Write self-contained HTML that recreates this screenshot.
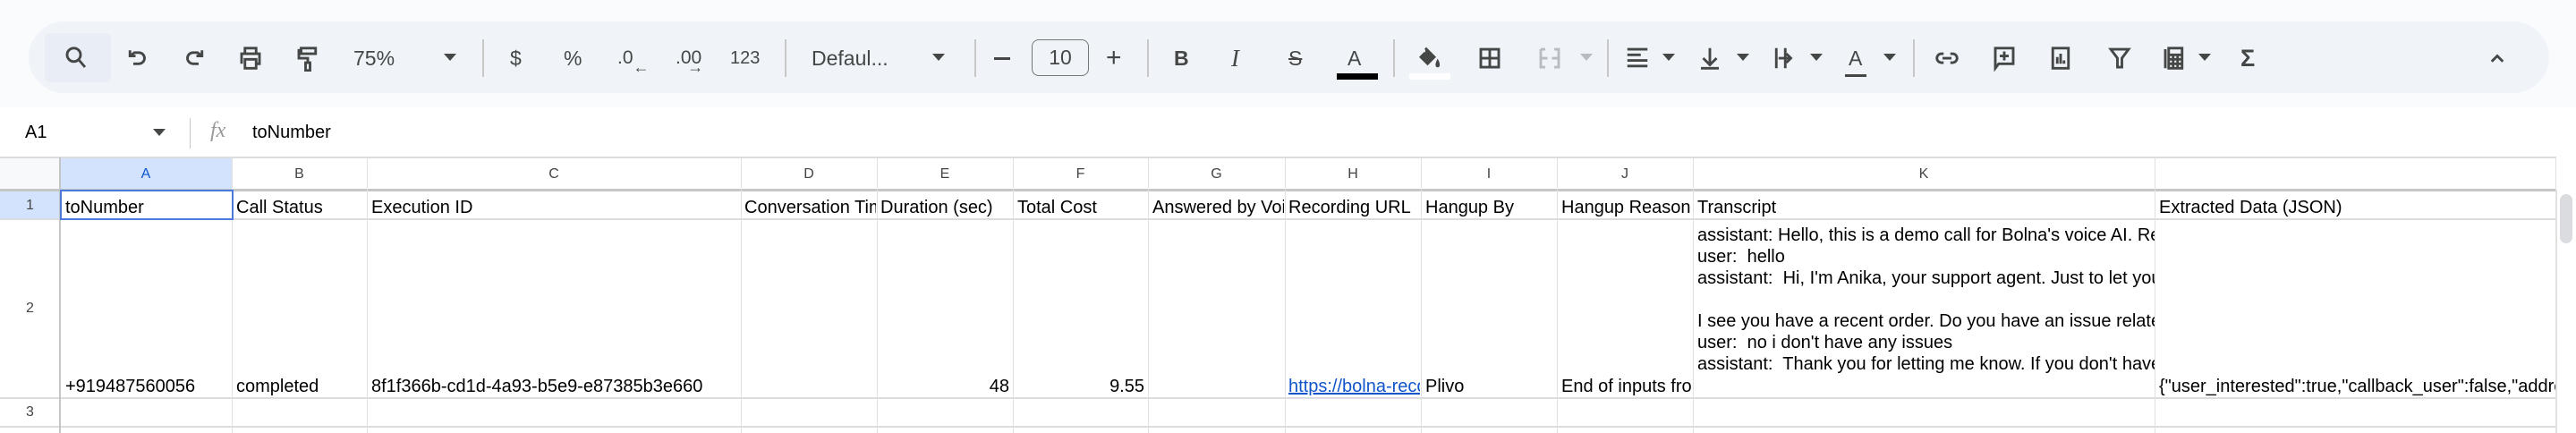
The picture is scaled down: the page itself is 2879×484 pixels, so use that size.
<!DOCTYPE html>
<html><head><meta charset="utf-8"><style>
*{margin:0;padding:0;box-sizing:border-box}
body{width:2879px;height:484px;overflow:hidden;background:#fff;font-family:"Liberation Sans",Arial,sans-serif;position:relative;color:#000}
.a{position:absolute}
.top{left:0;top:0;width:2879px;height:120px;background:#f9fbfd}
.pill{left:32px;top:24px;width:2817px;height:80px;background:#f0f4f9;border-radius:40px}
.ic{position:absolute;top:50px;width:30px;height:30px}
.ic svg{width:30px;height:30px;fill:none;stroke:#444746;stroke-width:2.3}
.t{position:absolute;color:#444746;font-size:23px;line-height:28px;top:51px}
.dd{position:absolute;top:60px;width:0;height:0;border-left:7px solid transparent;border-right:7px solid transparent;border-top:8px solid #444746}
.sep{position:absolute;top:44px;width:1.5px;height:42px;background:#c7c7c7}
.v{position:absolute;top:176px;height:308px;width:1px;background:#e1e1e1}
.h{position:absolute;left:0;width:2857px;height:2px;background:#dadce0}
.cl{position:absolute;top:186px;font-size:16px;color:#444;text-align:center;line-height:18px}
.c{position:absolute;font-size:20px;line-height:24px;white-space:nowrap;overflow:hidden}
.rn{position:absolute;left:0;width:67px;text-align:center;font-size:16px;color:#444}
</style></head><body>
<div class="a top"></div>
<div class="a pill"></div>
<div class="a" style="left:50px;top:37px;width:74px;height:55px;background:#e9eef6;border-radius:6px"></div>
<div class="ic" style="left:70px"><svg viewBox="0 0 24 24"><circle cx="10" cy="9" r="6"/><path d="M14 13l6 7"/></svg></div>
<div class="ic" style="left:139px"><svg viewBox="0 0 24 24"><path d="M5 5v5h5M5 10l4-3h4a5 5 0 010 10H8"/></svg></div>
<div class="ic" style="left:202px"><svg viewBox="0 0 24 24"><path d="M19 5v5h-5M19 10l-4-3h-4a5 5 0 000 10h5"/></svg></div>
<div class="ic" style="left:265px"><svg viewBox="0 0 24 24"><path d="M7 7V3h10v4M4 17V8h16v9h-3M7 13h10v8H7z"/></svg></div>
<div class="ic" style="left:329px"><svg viewBox="0 0 24 24"><path d="M6 3h13v5H6zM6 5H4v7h8v4M10 16h4v7h-4z"/></svg></div>
<div class="t" style="left:395px">75%</div>
<div class="dd" style="left:496px"></div>
<div class="sep" style="left:539px"></div>
<div class="t" style="left:570px">$</div>
<div class="t" style="left:630px">%</div>
<div class="t" style="left:690px;font-size:21px">.0<span style="font-size:18px;position:relative;top:10px">←</span></div>
<div class="t" style="left:755px;font-size:21px">.00<span style="font-size:18px;position:relative;top:10px;margin-left:-16px">→</span></div>
<div class="t" style="left:816px;font-size:20px">123</div>
<div class="sep" style="left:877px"></div>
<div class="t" style="left:907px">Defaul...</div>
<div class="dd" style="left:1042px"></div>
<div class="sep" style="left:1089px"></div>
<div class="a" style="left:1111px;top:64px;width:18px;height:2.5px;background:#444746"></div>
<div class="a" style="left:1153px;top:44px;width:64px;height:41px;border:1.5px solid #747775;border-radius:8px;font-size:23px;color:#444746;text-align:center;line-height:38px">10</div>
<div class="t" style="left:1236px;font-size:30px">+</div>
<div class="sep" style="left:1282px"></div>
<div class="t" style="left:1312px;font-weight:bold">B</div>
<div class="t" style="left:1376px;font-style:italic;font-family:'Liberation Serif',serif;font-size:27px">I</div>
<div class="t" style="left:1440px;text-decoration:line-through">S</div>
<div class="t" style="left:1506px">A</div>
<div class="a" style="left:1494px;top:82px;width:46px;height:7px;background:#000"></div>
<div class="sep" style="left:1557px"></div>
<div class="ic" style="left:1583px"><svg viewBox="0 0 24 24"><path d="M8 3l8 8-6 6-6-6 4-4M19 15c1 2 1 4 0 4s-1-2 0-4z" fill="#444746"/></svg></div>
<div class="a" style="left:1575px;top:82px;width:46px;height:7px;background:#fff"></div>
<div class="ic" style="left:1650px"><svg viewBox="0 0 24 24"><path d="M4 4h16v16H4zM12 4v16M4 12h16"/></svg></div>
<div class="ic" style="left:1717px"><svg viewBox="0 0 24 24" style="stroke:#b8bbbf"><path d="M4 4h4M4 4v16h4M16 4h4v16h-4M4 12h6M20 12h-6"/></svg></div>
<div class="dd" style="left:1766px;border-top-color:#b8bbbf"></div>
<div class="sep" style="left:1796px"></div>
<div class="ic" style="left:1815px"><svg viewBox="0 0 24 24"><path d="M3 4h18M3 9h12M3 14h18M3 19h18"/></svg></div>
<div class="dd" style="left:1858px"></div>
<div class="ic" style="left:1896px"><svg viewBox="0 0 24 24"><path d="M12 3v15M6 12l6 6 6-6M4 21h16"/></svg></div>
<div class="dd" style="left:1941px"></div>
<div class="ic" style="left:1979px"><svg viewBox="0 0 24 24"><path d="M5 3v18M13 3v18M7 12h10M14 8l4 4-4 4"/></svg></div>
<div class="dd" style="left:2023px"></div>
<div class="t" style="left:2066px">A</div>
<div class="a" style="left:2062px;top:83px;width:24px;height:2.5px;background:#444746"></div>
<div class="dd" style="left:2105px"></div>
<div class="sep" style="left:2138px"></div>
<div class="ic" style="left:2161px"><svg viewBox="0 0 24 24"><path d="M9 8H7a4 4 0 000 8h2M15 8h2a4 4 0 010 8h-2M8 12h8"/></svg></div>
<div class="ic" style="left:2225px"><svg viewBox="0 0 24 24"><path d="M4 3h16v14H7l-3 4zM12 6v8M8 10h8"/></svg></div>
<div class="ic" style="left:2288px"><svg viewBox="0 0 24 24"><path d="M5 3h14v18H5zM9 11v6M12 8v9M15 14v3"/></svg></div>
<div class="ic" style="left:2354px"><svg viewBox="0 0 24 24"><path d="M4 4h16l-6 8v8h-4v-8z"/></svg></div>
<div class="ic" style="left:2415px"><svg viewBox="0 0 24 24"><path d="M4 4v17M7 3h12v18H7zM7 9h12M7 13h12M7 17h12M11 9v12M15 9v12"/></svg></div>
<div class="dd" style="left:2457px"></div>
<div class="t" style="left:2504px;font-size:27px;font-weight:bold">Σ</div>
<div class="ic" style="left:2776px"><svg viewBox="0 0 24 24"><path d="M7 15l5-5 5 5"/></svg></div>

<div class="a" style="left:28px;top:136px;font-size:20px;line-height:24px">A1</div>
<div class="dd" style="left:171px;top:144px"></div>
<div class="a" style="left:212px;top:132px;width:1px;height:34px;background:#c7c7c7"></div>
<div class="a" style="left:235px;top:133px;font-size:24px;font-style:italic;font-family:'Liberation Serif',serif;color:#999">fx</div>
<div class="a" style="left:282px;top:136px;font-size:20px;line-height:24px">toNumber</div>

<div class="a" style="left:0;top:176px;width:2857px;height:36px;background:#fff"></div>
<div class="a" style="left:0;top:176px;width:67px;height:36px;background:#f8f9fa"></div>
<div class="a" style="left:67px;top:176px;width:192px;height:36px;background:#d3e3fd"></div>
<div class="a" style="left:0;top:212px;width:67px;height:33px;background:#d3e3fd"></div>
<div class="h" style="top:175px"></div>
<div class="h" style="top:211px;height:3px;background:#c4c7c5"></div>
<div class="h" style="top:244px"></div>
<div class="h" style="top:444px"></div>
<div class="h" style="top:476px"></div>
<div class="a" style="left:66px;top:176px;width:2px;height:308px;background:#c4c7c5"></div>
<div class="v" style="left:259px"></div><div class="v" style="left:410px"></div><div class="v" style="left:828px"></div>
<div class="v" style="left:980px"></div><div class="v" style="left:1132px"></div><div class="v" style="left:1283px"></div>
<div class="v" style="left:1436px"></div><div class="v" style="left:1588px"></div><div class="v" style="left:1740px"></div>
<div class="v" style="left:1892px"></div><div class="v" style="left:2408px"></div><div class="v" style="left:2856px"></div>

<div class="cl" style="left:67px;width:192px;color:#0b57d0">A</div>
<div class="cl" style="left:259px;width:151px">B</div>
<div class="cl" style="left:410px;width:418px">C</div>
<div class="cl" style="left:828px;width:152px">D</div>
<div class="cl" style="left:980px;width:152px">E</div>
<div class="cl" style="left:1132px;width:151px">F</div>
<div class="cl" style="left:1283px;width:153px">G</div>
<div class="cl" style="left:1436px;width:152px">H</div>
<div class="cl" style="left:1588px;width:152px">I</div>
<div class="cl" style="left:1740px;width:152px">J</div>
<div class="cl" style="left:1892px;width:516px">K</div>

<div class="rn" style="top:221px">1</div>
<div class="rn" style="top:336px">2</div>
<div class="rn" style="top:452px">3</div>

<div class="c" style="left:73px;top:220px;width:184px">toNumber</div>
<div class="c" style="left:264px;top:220px;width:145px">Call Status</div>
<div class="c" style="left:415px;top:220px">Execution ID</div>
<div class="c" style="left:832px;top:220px;width:147px">Conversation Time</div>
<div class="c" style="left:984px;top:220px;width:147px">Duration (sec)</div>
<div class="c" style="left:1137px;top:220px">Total Cost</div>
<div class="c" style="left:1288px;top:220px;width:147px">Answered by Voicemail</div>
<div class="c" style="left:1440px;top:220px;width:147px">Recording URL</div>
<div class="c" style="left:1593px;top:220px">Hangup By</div>
<div class="c" style="left:1745px;top:220px;width:146px">Hangup Reason</div>
<div class="c" style="left:1897px;top:220px">Transcript</div>
<div class="c" style="left:2413px;top:220px">Extracted Data (JSON)</div>
<div class="a" style="left:67px;top:212px;width:194px;height:34px;border:2.5px solid #4a7bdc"></div>

<div class="c" style="left:73px;top:420px">+919487560056</div>
<div class="c" style="left:264px;top:420px">completed</div>
<div class="c" style="left:415px;top:420px">8f1f366b-cd1d-4a93-b5e9-e87385b3e660</div>
<div class="c" style="left:985px;top:420px;width:143px;text-align:right">48</div>
<div class="c" style="left:1137px;top:420px;width:142px;text-align:right">9.55</div>
<div class="c" style="left:1440px;top:420px;width:147px;color:#1155cc;text-decoration:underline">https://bolna-recordings</div>
<div class="c" style="left:1593px;top:420px">Plivo</div>
<div class="c" style="left:1745px;top:420px;width:146px">End of inputs from user</div>
<div class="c" style="left:1897px;top:251px;width:511px;line-height:24px;white-space:pre">assistant: Hello, this is a demo call for Bolna's voice AI. Reach
user:  hello
assistant:  Hi, I'm Anika, your support agent. Just to let you know

I see you have a recent order. Do you have an issue related
user:  no i don't have any issues
assistant:  Thank you for letting me know. If you don't have</div>
<div class="c" style="left:2413px;top:420px;width:443px">{"user_interested":true,"callback_user":false,"address":""}</div>

<div class="a" style="left:2857px;top:212px;width:22px;height:272px;background:#fff;border-left:1px solid #e1e1e1"></div>
<div class="a" style="left:2861px;top:217px;width:14px;height:55px;background:#dadce0;border-radius:7px"></div>
</body></html>
